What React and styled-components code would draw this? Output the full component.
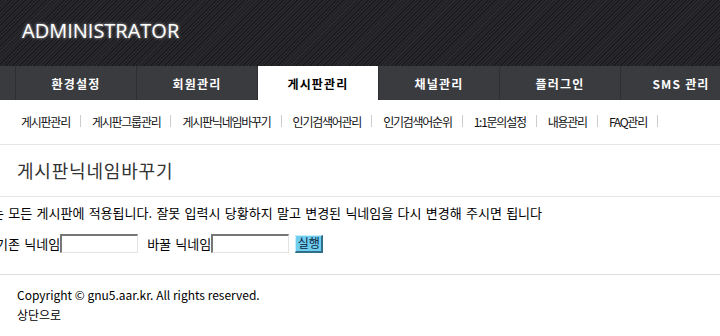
import React from 'react';
import styled, { createGlobalStyle } from 'styled-components';

const GlobalStyle = createGlobalStyle`
  html, body {
    margin: 0;
    padding: 0;
    background: #ffffff;
  }
  body {
    font-family: "Noto Sans CJK KR", "Noto Sans", sans-serif;
    font-size: 12px;
    color: #000000;
  }
  * {
    box-sizing: border-box;
  }
`;

const menus = ['환경설정', '회원관리', '게시판관리', '채널관리', '플러그인', 'SMS 관리'];
const subMenus = [
  '게시판관리',
  '게시판그룹관리',
  '게시판닉네임바꾸기',
  '인기검색어관리',
  '인기검색어순위',
  '1:1문의설정',
  '내용관리',
  'FAQ관리',
];

const App = () => {
  return (
    <Page>
      <GlobalStyle />
      <Header>
        <Logo>ADMINISTRATOR</Logo>
      </Header>
      <Gnb>
        <GnbList>
          {menus.map((menu) => (
            <GnbItem key={menu} $active={menu === '게시판관리'}>
              {menu}
            </GnbItem>
          ))}
        </GnbList>
      </Gnb>
      <Lnb>
        {subMenus.map((menu) => (
          <LnbItem key={menu}>{menu}</LnbItem>
        ))}
      </Lnb>
      <TitleBar>
        <Title>게시판닉네임바꾸기</Title>
      </TitleBar>
      <FormArea>
        <Notice>
          는 모든 게시판에 적용됩니다. 잘못 입력시 당황하지 말고 변경된 닉네임을 다시 변경해 주시면 됩니다
        </Notice>
        <FormRow>
          <Label>기존 닉네임</Label>
          <TextInput type="text" />
          <Label $gap>바꿀 닉네임</Label>
          <TextInput type="text" />
          <SubmitButton type="button">실행</SubmitButton>
        </FormRow>
      </FormArea>
      <Footer>
        <FooterLine>Copyright © gnu5.aar.kr. All rights reserved.</FooterLine>
        <FooterLine>상단으로</FooterLine>
      </Footer>
    </Page>
  );
};

const Page = styled.div`
  width: 720px;
  min-height: 336px;
  overflow: hidden;
`;

const Header = styled.div`
  height: 66px;
  padding: 17px 0 0 22px;
  background-color: #222225;
  background-image: repeating-linear-gradient(
    135deg,
    #1b1b1e 0px,
    #1b1b1e 1px,
    #29292d 1px,
    #29292d 2.5px
  );
`;

const Logo = styled.h1`
  margin: 0;
  font-family: "Open Sans", "Noto Sans", sans-serif;
  font-weight: 400;
  font-size: 20px;
  line-height: 28px;
  letter-spacing: 0;
  color: #ffffff;
  text-shadow: 0 0 3px rgba(255, 255, 255, 0.7);
`;

const Gnb = styled.div`
  height: 34px;
  background: #3a3b3f;
  padding-left: 15px;
  white-space: nowrap;
`;

const GnbList = styled.ul`
  display: flex;
  margin: 0;
  padding: 0;
  list-style: none;
  height: 100%;
  border-left: 1px solid #2e2f33;
`;

const GnbItem = styled.li`
  flex: 0 0 121px;
  display: flex;
  align-items: center;
  justify-content: center;
  border-right: 1px solid #2e2f33;
  background: ${(p) => (p.$active ? '#ffffff' : 'transparent')};
  color: ${(p) => (p.$active ? '#000000' : '#ffffff')};
  font-weight: 700;
  font-size: 12px;
  letter-spacing: 1.2px;
`;

const Lnb = styled.ul`
  display: flex;
  align-items: center;
  height: 45px;
  margin: 0;
  padding: 0 0 2px 10px;
  list-style: none;
  border-bottom: 1px solid #e5e5e5;
  white-space: nowrap;
`;

const LnbItem = styled.li`
  position: relative;
  padding: 0 11px 0 11px;
  font-size: 12px;
  letter-spacing: -1.25px;
  color: #111111;

  &::after {
    content: '';
    position: absolute;
    right: 0;
    top: 50%;
    width: 1px;
    height: 12px;
    margin-top: -6px;
    background: #cccccc;
  }
`;

const TitleBar = styled.div`
  height: 52px;
  padding: 0 0 0 17px;
  display: flex;
  align-items: center;
  border-bottom: 1px solid #e5e5e5;
`;

const Title = styled.h2`
  margin: 0 0 2px;
  font-weight: 400;
  font-size: 18px;
  letter-spacing: 0.8px;
  color: #333333;
`;

const FormArea = styled.div`
  margin-left: -8px;
  padding-bottom: 15px;
  border-bottom: 1px solid #dddddd;
  white-space: nowrap;
  font-size: 13px;
  word-spacing: 1.4px;
`;

const Notice = styled.p`
  margin: 0;
  padding-top: 1px;
  height: 31px;
  line-height: 30px;
`;

const FormRow = styled.div`
  display: flex;
  align-items: center;
  height: 31px;
  padding-left: 4px;
`;

const Label = styled.span`
  margin-left: ${(p) => (p.$gap ? '9px' : '0')};
`;

const TextInput = styled.input`
  width: 78px;
  height: 19px;
  margin: 0;
  padding: 0 2px;
  border-style: solid;
  border-width: 2px 1px 1px 2px;
  border-color: #767676 #e3e3e3 #e3e3e3 #767676;
  background: #ffffff;
  outline: none;
`;

const SubmitButton = styled.button`
  width: 28px;
  height: 18px;
  margin-left: 6px;
  padding: 0;
  font-family: "Noto Sans CJK KR", sans-serif;
  font-size: 12px;
  line-height: 14px;
  color: #0c1f3a;
  background: #6fcdf0;
  border-style: solid;
  border-width: 1px 2px 2px 1px;
  border-color: #c8eefb #2f6f8a #2f6f8a #c8eefb;
`;

const Footer = styled.div`
  padding: 10px 0 0 17px;
`;

const FooterLine = styled.div`
  line-height: 20px;
  font-size: 12px;
  color: #000000;
`;

export default App;
